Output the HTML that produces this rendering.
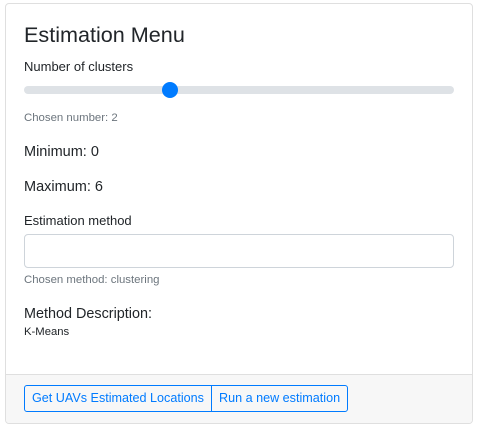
<!DOCTYPE html>
<html><head><style>
body{margin:0;background:#fff;font-family:"Liberation Sans",sans-serif;color:#212529;width:481px;height:429px;position:relative;overflow:hidden}
.card{position:absolute;left:5px;top:3px;width:466px;height:419px;border:1px solid #dfdfdf;border-radius:4px;overflow:hidden}
.foot{position:absolute;left:0;right:0;top:370px;bottom:0;background:#f7f7f7;border-top:1px solid #dfdfdf}
.t{position:absolute;white-space:nowrap;line-height:1}
.track{position:absolute;left:24px;top:86px;width:430px;height:8px;border-radius:4px;background:#dee2e6}
.thumb{position:absolute;left:162px;top:82px;width:16px;height:16px;border-radius:50%;background:#007bff}
.inp{position:absolute;left:24px;top:234px;width:428px;height:32px;border:1px solid #ced4da;border-radius:4px}
.btns{position:absolute;left:24px;top:385px;height:25px;display:flex;border:1px solid #007bff;border-radius:3px}
.btns div{color:#007bff;font-size:12.6px;line-height:25px;padding:0 7px}
.btns div+div{border-left:1px solid #007bff}
</style></head><body>
<div class="card"><div class="foot"></div></div>
<div class="t" style="left:24px;top:24px;font-size:21.6px">Estimation Menu</div>
<div class="t" style="left:24px;top:60px;font-size:13px">Number of clusters</div>
<div class="track"></div><div class="thumb"></div>
<div class="t" style="left:24px;top:113px;font-size:11.4px;color:#6c757d">Chosen number: 2</div>
<div class="t" style="left:24px;top:145px;font-size:14.5px">Minimum: 0</div>
<div class="t" style="left:24px;top:180px;font-size:14.5px">Maximum: 6</div>
<div class="t" style="left:24px;top:214px;font-size:13px">Estimation method</div>
<div class="inp"></div>
<div class="t" style="left:24px;top:275px;font-size:11.4px;color:#6c757d">Chosen method: clustering</div>
<div class="t" style="left:24px;top:307px;font-size:14.4px">Method Description:</div>
<div class="t" style="left:24px;top:327px;font-size:11.3px">K-Means</div>
<div class="btns"><div>Get UAVs Estimated Locations</div><div>Run a new estimation</div></div>
</body></html>
